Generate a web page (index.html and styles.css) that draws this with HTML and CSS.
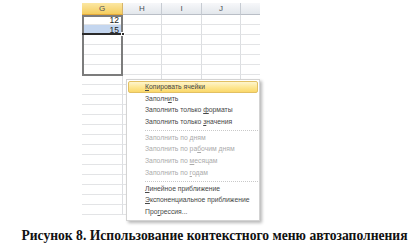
FILE: index.html
```html
<!DOCTYPE html>
<html lang="ru">
<head>
<meta charset="utf-8">
<title>Автозаполнение</title>
<link rel="stylesheet" href="styles.css">
</head>
<body>
<div class="page">
  <div class="sheet">
    <div class="hc hc-sel">G</div>
    <div class="hc">H</div>
    <div class="hc">I</div>
    <div class="hc">J</div>
    <div class="hc hc-cut">K</div>

    <div class="c num">12</div><div class="c"></div><div class="c"></div><div class="c"></div><div class="c"></div>
    <div class="c num c-blue">15</div><div class="c"></div><div class="c"></div><div class="c"></div><div class="c"></div>
    <div class="c"></div><div class="c"></div><div class="c"></div><div class="c"></div><div class="c"></div>
    <div class="c"></div><div class="c"></div><div class="c"></div><div class="c"></div><div class="c"></div>
    <div class="c"></div><div class="c"></div><div class="c"></div><div class="c"></div><div class="c"></div>
    <div class="c"></div><div class="c"></div><div class="c"></div><div class="c"></div><div class="c"></div>
    <div class="c"></div><div class="c"></div><div class="c"></div><div class="c"></div><div class="c"></div>
    <div class="c"></div><div class="c"></div><div class="c"></div><div class="c"></div><div class="c"></div>
    <div class="c"></div><div class="c"></div><div class="c"></div><div class="c"></div><div class="c"></div>
    <div class="c"></div><div class="c"></div><div class="c"></div><div class="c"></div><div class="c"></div>
    <div class="c"></div><div class="c"></div><div class="c"></div><div class="c"></div><div class="c"></div>
    <div class="c"></div><div class="c"></div><div class="c"></div><div class="c"></div><div class="c"></div>
    <div class="c"></div><div class="c"></div><div class="c"></div><div class="c"></div><div class="c"></div>
    <div class="c"></div><div class="c"></div><div class="c"></div><div class="c"></div><div class="c"></div>
    <div class="c"></div><div class="c"></div><div class="c"></div><div class="c"></div><div class="c"></div>
    <div class="c"></div><div class="c"></div><div class="c"></div><div class="c"></div><div class="c"></div>
    <div class="c"></div><div class="c"></div><div class="c"></div><div class="c"></div><div class="c"></div>
    <div class="c"></div><div class="c"></div><div class="c"></div><div class="c"></div><div class="c"></div>
    <div class="c"></div><div class="c"></div><div class="c"></div><div class="c"></div><div class="c"></div>
    <div class="c"></div><div class="c"></div><div class="c"></div><div class="c"></div><div class="c"></div>

    <div class="range-outline"></div>
    <div class="sel-bottom"></div>
    <div class="fill-handle"></div>

    <div class="menu">
      <div class="mi mi-hot"><u>К</u>опировать ячейки</div>
      <div class="mi">Заполн<u>и</u>ть</div>
      <div class="mi">Заполнить только <u>ф</u>орматы</div>
      <div class="mi">Заполнить только <u>з</u>начения</div>
      <div class="msep"></div>
      <div class="mi mi-off">Заполнить по <u>д</u>ням</div>
      <div class="mi mi-off">Заполнить по ра<u>б</u>очим дням</div>
      <div class="mi mi-off">Заполнить по <u>м</u>есяцам</div>
      <div class="mi mi-off">Заполнить по <u>г</u>одам</div>
      <div class="msep"></div>
      <div class="mi"><u>Л</u>инейное приближение</div>
      <div class="mi"><u>Э</u>кспоненциальное приближение</div>
      <div class="mi">Про<u>г</u>рессия...</div>
    </div>
  </div>
  <p class="caption">Рисунок 8. Использование контекстного меню автозаполнения</p>
</div>
</body>
</html>
```

FILE: styles.css
```css
html, body {
  margin: 0;
  padding: 0;
  background: #ffffff;
}

.page {
  width: 419px;
  height: 249px;
  overflow: hidden;
}

.sheet {
  position: relative;
  margin: 3px 0 0 82px;
  width: 178px;
  display: grid;
  grid-template-columns: 41px 39px 40px 39px 19px;
  grid-template-rows: 12px;
  grid-auto-rows: 10px;
  font-family: "Liberation Sans", Arial, sans-serif;
}

.hc {
  box-sizing: border-box;
  border-right: 1px solid #c6cbd2;
  border-bottom: 1px solid #b9bec6;
  background: linear-gradient(#f7f8fa, #e3e7ec);
  color: #4a4f57;
  font-size: 8px;
  line-height: 11px;
  text-align: center;
}

.hc-sel {
  background: linear-gradient(#fbe7a3, #f5cd5e);
  border-bottom-color: #e3a93a;
  border-right-color: #d6b46a;
}

.hc-cut {
  border-right: none;
  color: transparent;
}

.c {
  box-sizing: border-box;
  border-right: 1px solid #dcdee1;
  border-bottom: 1px solid #e3e4e6;
  font-size: 8.5px;
  line-height: 10px;
  color: #222;
}

.c:nth-child(5n) {
  border-right: none;
}

.num {
  text-align: right;
  padding-right: 3px;
}

.c-blue {
  background: #c4d6ef;
}

.range-outline {
  position: absolute;
  left: 0;
  top: 12px;
  width: 41px;
  height: 61px;
  box-sizing: border-box;
  border: 2px solid #7c7c7c;
}

.sel-bottom {
  position: absolute;
  left: 0;
  top: 30px;
  width: 41px;
  height: 2px;
  background: #2b2b2b;
}

.fill-handle {
  position: absolute;
  left: 39px;
  top: 29px;
  width: 4px;
  height: 4px;
  background: #2b2b2b;
  border: 1px solid #ffffff;
  box-sizing: border-box;
}

.menu {
  position: absolute;
  left: 44px;
  top: 76px;
  width: 134px;
  box-sizing: border-box;
  padding: 1px 1px 2px 1px;
  background: #ffffff;
  border: 1px solid #d3d3d3;
  box-shadow: 2px 2px 3px rgba(0, 0, 0, 0.28);
  font-family: "Liberation Sans", Arial, sans-serif;
  font-size: 6.8px;
}

.mi {
  height: 11.7px;
  line-height: 11.7px;
  padding-left: 17px;
  color: #474747;
  white-space: nowrap;
  box-sizing: border-box;
}

.mi-hot {
  border: 1px solid #e2c063;
  border-radius: 2px;
  line-height: 9.7px;
  padding-left: 16px;
  background: linear-gradient(#fef5cd, #fde690 55%, #fbd86a);
}

.mi-off {
  color: #ababab;
}

.mi u {
  text-decoration-thickness: 0.6px;
  text-underline-offset: 1px;
}

.msep {
  height: 4px;
  margin-left: 17px;
  box-sizing: border-box;
  border-bottom: 1px dotted #c9c9c9;
  transform: translateY(-1px);
}

.caption {
  margin: 13px 0 0 0;
  padding-left: 10px;
  text-align: center;
  font-family: "Liberation Serif", "Times New Roman", serif;
  font-weight: bold;
  font-size: 13.6px;
  line-height: 15px;
  color: #111;
}
```
